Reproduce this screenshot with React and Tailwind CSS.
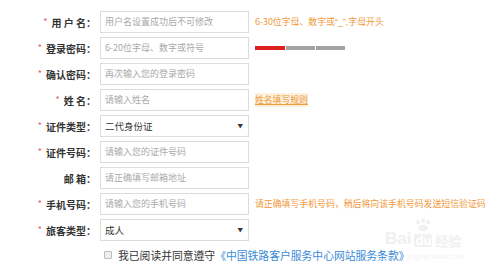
import React from "react";

const Q = ({ children }) => (
  <span className="font-['Liberation_Sans',sans-serif]">{children}</span>
);

const rows = [
  {
    req: true,
    label: "用 户 名：",
    ph: "用户名设置成功后不可修改",
    hint: "text",
    hintNode: (
      <>
        6-30位字母、数字或<Q>{"\u201c_\u201d,"}</Q>字母开头
      </>
    ),
  },
  { req: true, label: "登录密码：", ph: "6-20位字母、数字或符号", hint: "bar" },
  { req: true, label: "确认密码：", ph: "再次输入您的登录密码" },
  { req: true, label: "姓 名：", ph: "请输入姓名", hint: "link", hintNode: "姓名填写规则" },
  { req: true, label: "证件类型：", value: "二代身份证", select: true },
  { req: true, label: "证件号码：", ph: "请输入您的证件号码" },
  { req: false, label: "邮 箱：", ph: "请正确填写邮箱地址" },
  {
    req: true,
    label: "手机号码：",
    ph: "请输入您的手机号码",
    hint: "text",
    hintNode: "请正确填写手机号码，稍后将向该手机号码发送短信验证码",
  },
  { req: true, label: "旅客类型：", value: "成人", select: true },
];

function Row({ r }) {
  return (
    <div className="flex h-[22px] items-center">
      <div className="flex w-[100px] shrink-0 items-center justify-end pr-[4px] text-[10px] font-semibold text-[#333]">
        {r.req && <span className="mr-[4px] text-[9px] font-normal text-[#e4575f]">*</span>}
        <span className="whitespace-pre">{r.label}</span>
      </div>
      <div className="flex h-[22px] w-[149px] shrink-0 items-center justify-between border border-[#dcdcdc] bg-white pl-[4px] pr-[5px]">
        {r.select ? (
          <>
            <span className="text-[9.5px] text-[#333]">{r.value}</span>
            <span className="text-[5.5px] text-[#333]">▼</span>
          </>
        ) : (
          <span className="text-[9px] text-[#a9a9a9]">{r.ph}</span>
        )}
      </div>
      <div className="ml-[6px] flex items-center">
        {r.hint === "text" && (
          <span className="whitespace-nowrap text-[8.9px] text-[#f0993a]">{r.hintNode}</span>
        )}
        {r.hint === "link" && (
          <span className="bg-[#fdf0dc] text-[8.8px] text-[#ee9a3a] underline">{r.hintNode}</span>
        )}
        {r.hint === "bar" && (
          <div className="flex gap-[1px]">
            <div className="h-[4px] w-[30px] bg-[#dd1f1f]" />
            <div className="h-[4px] w-[29px] bg-[#a3a3a3]" />
            <div className="h-[4px] w-[29px] bg-[#a3a3a3]" />
          </div>
        )}
      </div>
    </div>
  );
}

export default function App() {
  return (
    <div className="relative h-[275px] w-[500px] overflow-hidden bg-white font-['Noto_Sans_CJK_SC',sans-serif]">
      <div className="flex flex-col gap-[4px] pt-[11px]">
        {rows.map((r, i) => (
          <Row key={i} r={r} />
        ))}
      </div>
      <div className="mt-[6px] flex items-center pl-[104px]">
        <div className="h-[8px] w-[8px] rounded-[1px] border border-[#bdbdbd] bg-[#eeeeee]" />
        <span className="ml-[6px] text-[10.8px] text-[#333]">我已阅读并同意遵守</span>
        <span className="text-[10.8px] text-[#3a8ad8]">《中国铁路客户服务中心网站服务条款》</span>
      </div>
      <div className="pointer-events-none absolute left-[385px] top-[218px] flex flex-col items-start">
        <svg width="20" height="14" viewBox="0 0 20 14" className="ml-[28px]">
          <g fill="#f1f1f1">
            <ellipse cx="5" cy="4" rx="2" ry="2.6" />
            <ellipse cx="10" cy="2.6" rx="2" ry="2.6" />
            <ellipse cx="15" cy="4" rx="2" ry="2.6" />
            <ellipse cx="10" cy="10" rx="5" ry="3.6" />
          </g>
        </svg>
        <div className="-mt-[2px] flex items-end leading-none">
          <span className="font-['Liberation_Sans',sans-serif] text-[17px] font-bold text-[#f0f0f0]">Bai</span>
          <span className="ml-[3px] rounded-[2px] bg-[#f1f1f1] px-[1px] font-['Liberation_Sans',sans-serif] text-[13px] font-bold text-white">du</span>
          <span className="ml-[3px] text-[13px] font-bold text-[#f0f0f0]">经验</span>
        </div>
        <span className="ml-[22px] mt-[5px] font-['Liberation_Sans',sans-serif] text-[7px] text-[#f3f3f3]">jingyan.baidu.com</span>
      </div>
    </div>
  );
}
